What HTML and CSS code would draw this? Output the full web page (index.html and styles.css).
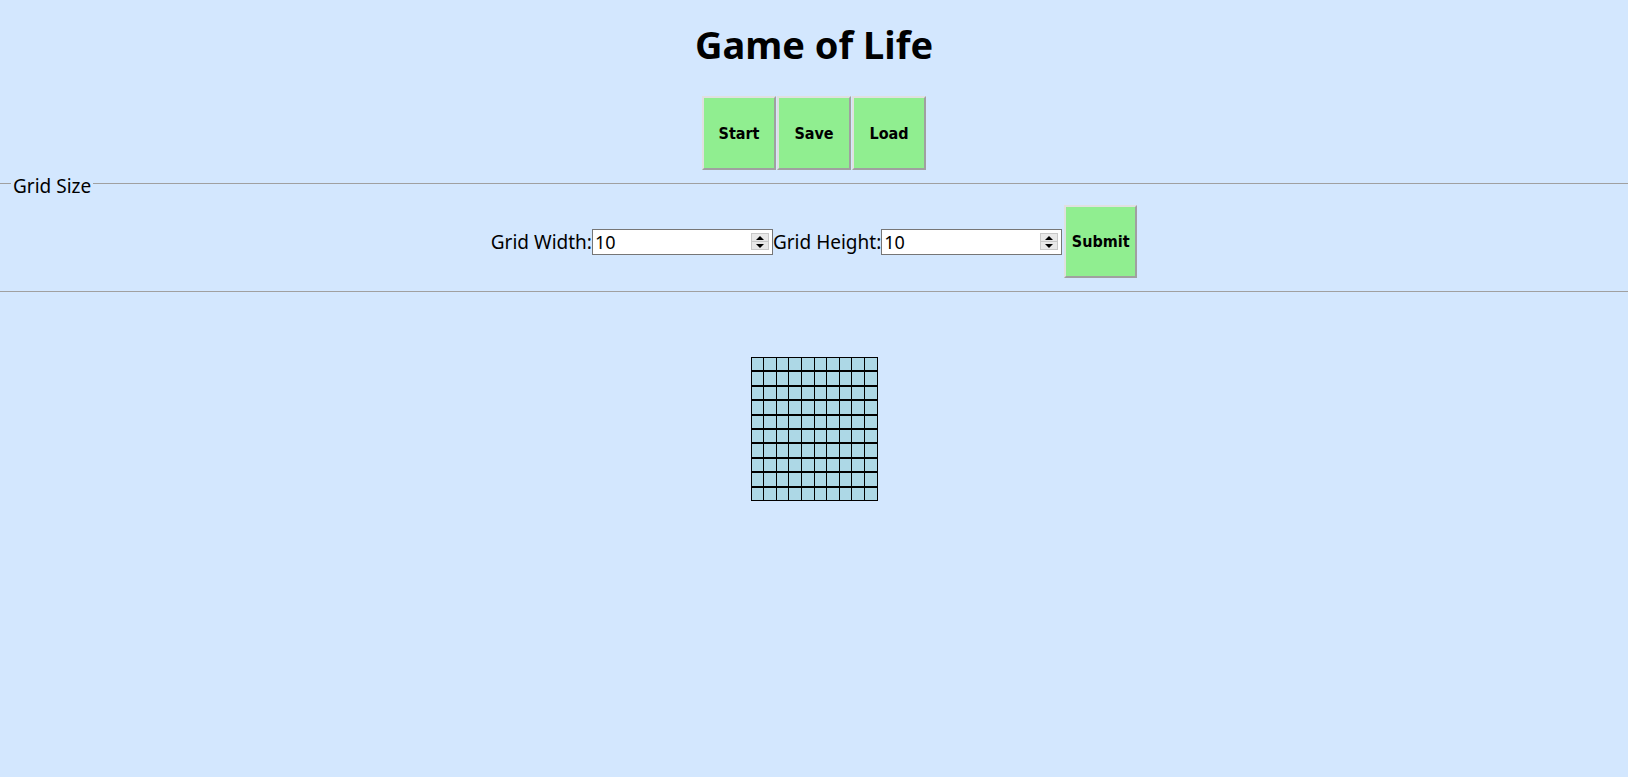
FILE: index.html
```html
<!DOCTYPE html>
<html>
<head>
<meta charset="utf-8">
<title>Game of Life</title>
<link rel="stylesheet" href="styles.css">
</head>
<body>
<h1 class="title">Game of Life</h1>
<div class="controls">
  <button class="btn">Start</button>
  <button class="btn">Save</button>
  <button class="btn">Load</button>
</div>
<fieldset class="size-box">
  <legend class="legend">Grid Size</legend>
  <div class="size-row">
    <label class="lbl">Grid Width:</label>
    <div class="num">
      <span class="num-val">10</span>
      <span class="spin"><span class="arr up"></span><span class="arr down"></span></span>
    </div>
    <label class="lbl">Grid Height:</label>
    <div class="num">
      <span class="num-val">10</span>
      <span class="spin"><span class="arr up"></span><span class="arr down"></span></span>
    </div>
    <button class="btn submit">Submit</button>
  </div>
</fieldset>
<div class="board-wrap">
  <div class="board" id="board"></div>
</div>
<script>
  var b = document.getElementById('board');
  for (var i = 0; i < 100; i++) {
    var c = document.createElement('div');
    c.className = 'cell';
    b.appendChild(c);
  }
</script>
</body>
</html>
```

FILE: styles.css
```css
html, body {
  margin: 0;
  padding: 0;
  background: #d3e7fe;
  font-family: "Noto Sans", "Open Sans", sans-serif;
  color: #000;
}
.title {
  margin: 0;
  padding-top: 20px;
  text-align: center;
  font-size: 38px;
  line-height: 48px;
  font-weight: 700;
}
.controls {
  display: flex;
  justify-content: center;
  gap: 1px;
  margin-top: 28px;
}
.btn {
  width: 74px;
  height: 74px;
  margin: 0;
  padding: 0;
  background: #90ee90;
  border-style: solid;
  border-width: 2px;
  border-color: #e0e0e0 #a0a0a0 #a0a0a0 #e0e0e0;
  font-family: "DejaVu Sans Condensed", "DejaVu Sans", sans-serif;
  font-weight: 700;
  font-size: 16px;
  color: #000;
}
.size-box {
  margin: -2px 0 0 0;
  padding: 0 0 13px 0;
  border: none;
  border-top: 1px solid #a0a0a0;
  border-bottom: 1px solid #a0a0a0;
}
.legend {
  margin-left: 11px;
  padding: 6px 2px 0 2px;
  font-size: 19px;
  line-height: 24px;
}
.size-row {
  display: flex;
  justify-content: center;
  align-items: center;
  margin-top: 7px;
}
.lbl {
  font-size: 19px;
}
.num {
  display: flex;
  align-items: center;
  justify-content: space-between;
  width: 174px;
  height: 24px;
  border: 1px solid #767676;
  background: #fff;
  padding: 0 3px 0 2px;
  box-sizing: content-box;
}
.num-val {
  font-size: 18px;
}
.spin {
  display: flex;
  flex-direction: column;
  width: 16px;
  height: 15px;
  border: 1px solid #c8c8c8;
  background: #e8e8e8;
}
.arr {
  flex: 1;
  display: flex;
  align-items: center;
  justify-content: center;
}
.arr.up { border-bottom: 1px solid #c8c8c8; }
.arr.up::before {
  content: "";
  border-left: 4px solid transparent;
  border-right: 4px solid transparent;
  border-bottom: 4px solid #000;
}
.arr.down::before {
  content: "";
  border-left: 4px solid transparent;
  border-right: 4px solid transparent;
  border-top: 4px solid #000;
}
.submit {
  margin-left: 2px;
  width: 73px;
  height: 73px;
}
.board-wrap {
  display: flex;
  justify-content: center;
  padding-top: 65px;
}
.board {
  display: grid;
  grid-template-columns: repeat(10, 1fr);
  grid-template-rows: repeat(10, 1fr);
  column-gap: 1px;
  row-gap: 2px;
  width: 125px;
  height: 142px;
  background: #000;
  border: 1px solid #000;
}
.cell {
  background: #add8e6;
}
```
